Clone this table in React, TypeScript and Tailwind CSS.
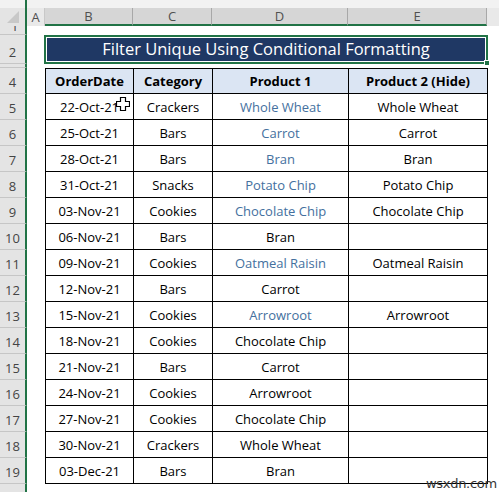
import React from "react";

const rows: [string, string, string, boolean, string][] = [
  ["22-Oct-21", "Crackers", "Whole Wheat", true, "Whole Wheat"],
  ["25-Oct-21", "Bars", "Carrot", true, "Carrot"],
  ["28-Oct-21", "Bars", "Bran", true, "Bran"],
  ["31-Oct-21", "Snacks", "Potato Chip", true, "Potato Chip"],
  ["03-Nov-21", "Cookies", "Chocolate Chip", true, "Chocolate Chip"],
  ["06-Nov-21", "Bars", "Bran", false, ""],
  ["09-Nov-21", "Cookies", "Oatmeal Raisin", true, "Oatmeal Raisin"],
  ["12-Nov-21", "Bars", "Carrot", false, ""],
  ["15-Nov-21", "Cookies", "Arrowroot", true, "Arrowroot"],
  ["18-Nov-21", "Cookies", "Chocolate Chip", false, ""],
  ["21-Nov-21", "Bars", "Carrot", false, ""],
  ["24-Nov-21", "Cookies", "Arrowroot", false, ""],
  ["27-Nov-21", "Cookies", "Chocolate Chip", false, ""],
  ["30-Nov-21", "Crackers", "Whole Wheat", false, ""],
  ["03-Dec-21", "Bars", "Bran", false, ""],
];

const font = { fontFamily: "'Open Sans', 'Liberation Sans', sans-serif" };

function RowHead({ n, h }: { n?: string; h: string }) {
  return (
    <div
      className={`w-[27px] shrink-0 ${h} bg-[#e4e4e4] border-b border-[#c6c6c6] border-r-2 border-r-[#217346] flex items-end justify-center text-[13px] text-[#444] leading-none pb-[4px] overflow-hidden`}
    >
      {n}
    </div>
  );
}

export default function App() {
  return (
    <div className="w-[499px] h-[492px] overflow-hidden bg-white relative" style={font}>
      {/* top band */}
      <div className="h-[8px] bg-[#f2f2f2] flex">
        <div className="w-[27px] border-r-2 border-r-[#217346] bg-[#f2f2f2]" />
      </div>
      {/* column headers */}
      <div className="h-[18px] flex text-[13px] text-[#505050] leading-none">
        <div className="w-[27px] shrink-0 bg-[#e4e4e4] border-r-2 border-r-[#217346] relative">
          <svg width="12" height="12" className="absolute right-[6px] bottom-[3px]">
            <polygon points="12,0 12,12 0,12" fill="#c8c8c8" />
          </svg>
        </div>
        <div className="w-[18px] shrink-0 bg-[#e9e9e9] border-r border-[#c8c8c8] flex items-center justify-center">A</div>
        <div className="w-[88px] shrink-0 bg-[#d6d6d6] border-r border-[#a8a8a8] border-b-2 border-b-[#217346] flex items-center justify-center">B</div>
        <div className="w-[79px] shrink-0 bg-[#d6d6d6] border-r border-[#a8a8a8] border-b-2 border-b-[#217346] flex items-center justify-center">C</div>
        <div className="w-[136px] shrink-0 bg-[#d6d6d6] border-r border-[#a8a8a8] border-b-2 border-b-[#217346] flex items-center justify-center">D</div>
        <div className="w-[139px] shrink-0 bg-[#d6d6d6] border-r border-[#a8a8a8] border-b-2 border-b-[#217346] flex items-center justify-center">E</div>
        <div className="flex-1 bg-[#e9e9e9]" />
      </div>
      {/* row 1 */}
      <div className="flex h-[9px]">
        <div className="w-[27px] shrink-0 h-[9px] bg-[#e4e4e4] border-b border-[#c6c6c6] border-r-2 border-r-[#217346] relative overflow-hidden">
          <span className="absolute left-[11px] top-[-9px] text-[13px] text-[#444]">1</span>
        </div>
      </div>
      {/* row 2 title */}
      <div className="flex h-[29px]">
        <div className="w-[27px] shrink-0 h-[29px] bg-[#e4e4e4] border-b border-[#c6c6c6] border-r-2 border-r-[#217346] flex items-end justify-center text-[13px] text-[#444] pb-[1px]">2</div>
        <div className="w-[17px] shrink-0" />
        <div className="w-[444px] shrink-0 h-[29px] border-2 border-[#217346] relative">
          <div className="h-full border border-white bg-[#1f3864] flex items-center justify-center text-white text-[16.5px] leading-none pb-[1px]">
            Filter Unique Using Conditional Formatting
          </div>
          <div className="absolute right-[-4px] bottom-[-4px] w-[6px] h-[6px] bg-[#217346] border border-white" />
        </div>
      </div>
      {/* row 3 */}
      <div className="flex h-[4px]">
        <div className="w-[27px] shrink-0 h-[4px] bg-[#e4e4e4] border-b border-[#c6c6c6] border-r-2 border-r-[#217346]" />
      </div>
      {/* table header row 4 */}
      <div className="flex h-[26px] text-[13px] text-black">
        <RowHead n="4" h="h-[26px]" />
        <div className="w-[18px] shrink-0" />
        <div className="flex border-t border-l border-black bg-[#dbe5f3] font-bold">
          <div className="w-[88px] border-r border-b border-black flex items-center justify-center pt-[2px]">OrderDate</div>
          <div className="w-[79px] border-r border-b border-black flex items-center justify-center pt-[2px]">Category</div>
          <div className="w-[136px] border-r border-b border-black flex items-center justify-center pt-[2px]">Product 1</div>
          <div className="w-[139px] border-r border-b border-black flex items-center justify-center pt-[2px]">Product 2 (Hide)</div>
        </div>
      </div>
      {rows.map((r, i) => (
        <div key={i} className="flex h-[26px] text-[13px] text-black">
          <RowHead n={String(i + 5)} h="h-[26px]" />
          <div className="w-[18px] shrink-0" />
          <div className="flex border-l border-black">
            <div className="w-[88px] border-r border-b border-black flex items-center justify-center pt-[2px]">{r[0]}</div>
            <div className="w-[79px] border-r border-b border-black flex items-center justify-center pt-[2px]">{r[1]}</div>
            <div className={`w-[136px] border-r border-b border-black flex items-center justify-center pt-[2px] ${r[3] ? "text-[#44709e]" : ""}`}>{r[2]}</div>
            <div className="w-[139px] border-r border-b border-black flex items-center justify-center pt-[2px]">{r[4]}</div>
          </div>
        </div>
      ))}
      {/* row 20 */}
      <div className="flex h-[9px]">
        <div className="w-[27px] shrink-0 h-[9px] bg-[#e4e4e4] border-r-2 border-r-[#217346]" />
      </div>
      {/* cursor */}
      <svg width="14" height="14" viewBox="0 0 14 14" className="absolute left-[116px] top-[97px]">
        <path d="M4.5 0.5 H9.5 V4.5 H13.5 V9.5 H9.5 V13.5 H4.5 V9.5 H0.5 V4.5 H4.5 Z" fill="white" stroke="black" strokeWidth="1.2" />
      </svg>
      {/* watermark */}
      <div className="absolute left-[426px] top-[477px] text-[13px] text-[#333] leading-none" style={{ fontFamily: "'DejaVu Sans', sans-serif", letterSpacing: "-0.3px" }}>
        wsxdn.com
      </div>
    </div>
  );
}
